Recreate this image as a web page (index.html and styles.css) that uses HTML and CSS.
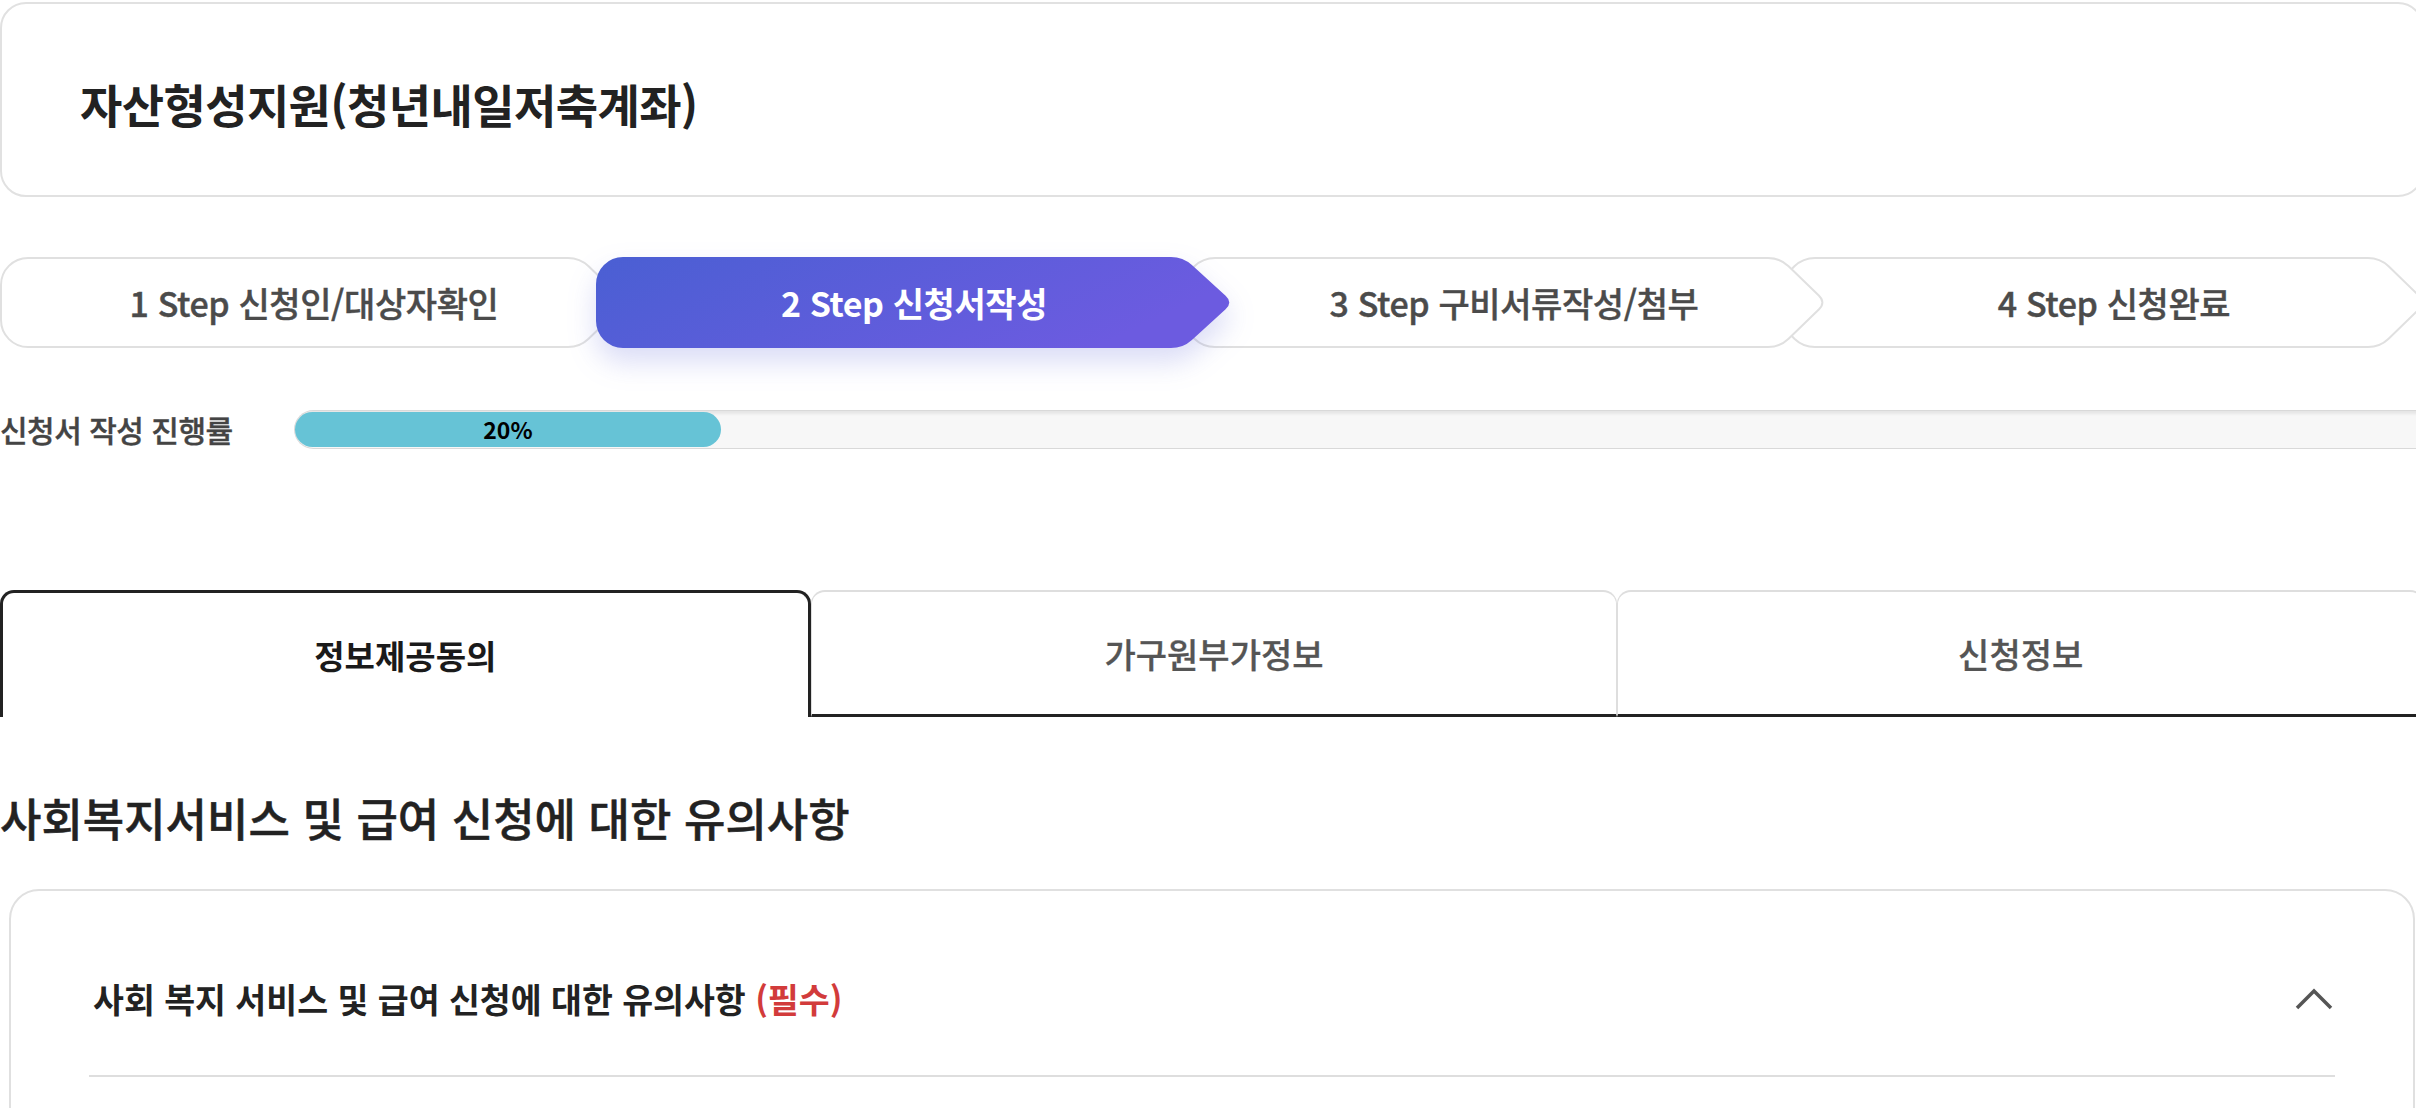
FILE: index.html
```html
<!DOCTYPE html>
<html lang="ko">
<head>
<meta charset="utf-8">
<title>자산형성지원(청년내일저축계좌)</title>
<link rel="stylesheet" href="styles.css">
</head>
<body>
<div class="page">
  <header class="title-card">
    <h1>자산형성지원(청년내일저축계좌)</h1>
  </header>

  <ol class="steps">
    <li class="step step-1">
      <svg class="step-shape" viewBox="0 0 700 91" aria-hidden="true">
        <path class="shape-idle" d="M 78,1 H 618 Q 630,1 638.6,9.3 L 668.8,38.5 Q 676,45.5 668.8,52.5 L 638.6,81.7 Q 630,90 618,90 H 78 A 27 27 0 0 1 51,63 V 28 A 27 27 0 0 1 78,1 Z"/>
      </svg>
      <span class="step-label">1 Step 신청인/대상자확인</span>
    </li>
    <li class="step step-2 step-active">
      <svg class="step-shape" viewBox="0 0 700 91" aria-hidden="true">
        <defs>
          <linearGradient id="activeGrad" x1="0" y1="0" x2="1" y2="0.3">
            <stop offset="0" stop-color="#4a5fd3"/>
            <stop offset="1" stop-color="#6c5be0"/>
          </linearGradient>
        </defs>
        <path fill="url(#activeGrad)" d="M 73,0 H 621 Q 633,0 641.9,8.1 L 675.6,38.8 Q 683,45.5 675.6,52.2 L 641.9,82.9 Q 633,91 621,91 H 73 A 27 27 0 0 1 46,64 V 27 A 27 27 0 0 1 73,0 Z"/>
      </svg>
      <span class="step-label">2 Step 신청서작성</span>
    </li>
    <li class="step step-3">
      <svg class="step-shape" viewBox="0 0 700 91" aria-hidden="true">
        <path class="shape-idle" d="M 65,1 H 618 Q 630,1 638.6,9.3 L 668.8,38.5 Q 676,45.5 668.8,52.5 L 638.6,81.7 Q 630,90 618,90 H 65 Q 53,90 44.4,81.7 L 16.2,52.5 Q 9,45.5 16.2,38.5 L 44.4,9.3 Q 53,1 65,1 Z"/>
      </svg>
      <span class="step-label">3 Step 구비서류작성/첨부</span>
    </li>
    <li class="step step-4">
      <svg class="step-shape" viewBox="0 0 700 91" aria-hidden="true">
        <path class="shape-idle" d="M 65,1 H 618 Q 630,1 638.6,9.3 L 668.8,38.5 Q 676,45.5 668.8,52.5 L 638.6,81.7 Q 630,90 618,90 H 65 Q 53,90 44.4,81.7 L 16.2,52.5 Q 9,45.5 16.2,38.5 L 44.4,9.3 Q 53,1 65,1 Z"/>
      </svg>
      <span class="step-label">4 Step 신청완료</span>
    </li>
  </ol>

  <div class="progress-row">
    <span class="progress-label">신청서 작성 진행률</span>
    <div class="progress-track">
      <div class="progress-fill" style="width: 20%">20%</div>
    </div>
  </div>

  <nav class="tabs">
    <div class="tab tab-active">정보제공동의</div>
    <div class="tab">가구원부가정보</div>
    <div class="tab">신청정보</div>
  </nav>

  <h2 class="section-title">사회복지서비스 및 급여 신청에 대한 유의사항</h2>

  <section class="acc-card">
    <div class="acc-head">
      <h3 class="acc-title">사회 복지 서비스 및 급여 신청에 대한 유의사항 <em>(필수)</em></h3>
      <svg class="acc-chevron" viewBox="0 0 38 22" aria-hidden="true">
        <path d="M2 20 L19 3 L36 20"/>
      </svg>
    </div>
    <div class="acc-divider"></div>
  </section>
</div>
</body>
</html>
```
FILE: styles.css
```css
* {
  box-sizing: border-box;
  margin: 0;
  padding: 0;
}

html,
body {
  overflow: hidden;
  background: #ffffff;
}

body {
  font-family: "Noto Sans CJK KR", "Noto Sans", sans-serif;
  color: #222222;
}

.page {
  width: 2424px;
  padding-top: 2px;
}

/* Title card */
.title-card {
  height: 195px;
  border: 2px solid #e1e1e1;
  border-radius: 26px;
  display: flex;
  align-items: center;
  padding: 8px 0 0 78px;
}

.title-card h1 {
  font-size: 46px;
  font-weight: 700;
  line-height: 1.2;
  color: #222222;
  letter-spacing: -0.6px;
}

/* Steps */
.steps {
  list-style: none;
  display: flex;
  margin-top: 60px;
  height: 91px;
}

.step {
  position: relative;
  flex: 0 0 600px;
  height: 91px;
  display: flex;
  align-items: center;
  justify-content: center;
  padding-left: 28px;
  font-size: 34px;
  font-weight: 500;
  color: #4b4b4b;
  letter-spacing: -0.4px;
  -webkit-text-stroke: 0.4px #4b4b4b;
}

.step-1 { z-index: 1; }
.step-2 { z-index: 4; }
.step-3 { z-index: 3; }
.step-4 { z-index: 2; }

.step-shape {
  position: absolute;
  left: -50px;
  top: 0;
  width: 700px;
  height: 91px;
  overflow: visible;
}

.shape-idle {
  fill: #ffffff;
  stroke: #e0e0e0;
  stroke-width: 2;
}

.step-label {
  position: relative;
  z-index: 1;
}

.step-active {
  color: #ffffff;
  font-weight: 700;
  -webkit-text-stroke: 0;
}

.step-active .step-shape {
  filter: drop-shadow(0 14px 14px rgba(88, 96, 215, 0.22));
}

/* Progress */
.progress-row {
  display: flex;
  align-items: center;
  margin-top: 61px;
  height: 40px;
}

.progress-label {
  flex: none;
  width: 294px;
  font-size: 30px;
  font-weight: 500;
  color: #444444;
  letter-spacing: -0.5px;
  -webkit-text-stroke: 0.4px #444444;
}

.progress-track {
  flex: 1;
  height: 39px;
  padding: 1px 0;
  border: 1px solid #d9d9d9;
  border-right: none;
  border-radius: 20px 0 0 20px;
  background: #f7f7f7;
  box-shadow: inset 0 3px 3px rgba(0, 0, 0, 0.07);
}

.progress-fill {
  height: 100%;
  border-radius: 18px;
  background: #66c3d6;
  display: flex;
  align-items: center;
  justify-content: center;
  font-size: 23px;
  font-weight: 700;
  color: #000000;
}

/* Tabs */
.tabs {
  display: flex;
  margin-top: 141px;
}

.tab {
  flex: 1;
  height: 127px;
  display: flex;
  align-items: center;
  justify-content: center;
  font-size: 34px;
  font-weight: 500;
  color: #555555;
  -webkit-text-stroke: 0.3px #555555;
  border: 1px solid #dedede;
  border-top-width: 2px;
  border-bottom: 3px solid #222222;
  border-radius: 14px 14px 0 0;
}

.tab-active {
  border: 3px solid #222222;
  border-bottom: none;
  color: #1a1a1a;
  font-weight: 700;
  font-size: 33px;
  -webkit-text-stroke: 0;
}

/* Section */
.section-title {
  margin-top: 70px;
  font-size: 45px;
  font-weight: 500;
  line-height: 62px;
  color: #222222;
  -webkit-text-stroke: 0.5px #222222;
}

.acc-card {
  margin: 40px 9px 0;
  padding: 0 78px 300px;
  border: 2px solid #e0e0e0;
  border-radius: 30px;
}

.acc-head {
  display: flex;
  align-items: center;
  justify-content: space-between;
  padding: 84px 2px 52px 4px;
}

.acc-title {
  font-size: 33.6px;
  font-weight: 700;
  line-height: 48px;
  color: #222222;
}

.acc-title em {
  font-style: normal;
  color: #d23b3b;
}

.acc-chevron {
  width: 38px;
  height: 22px;
  fill: none;
  stroke: #555555;
  stroke-width: 3.5;
}

.acc-divider {
  height: 2px;
  background: #dedede;
}
```
